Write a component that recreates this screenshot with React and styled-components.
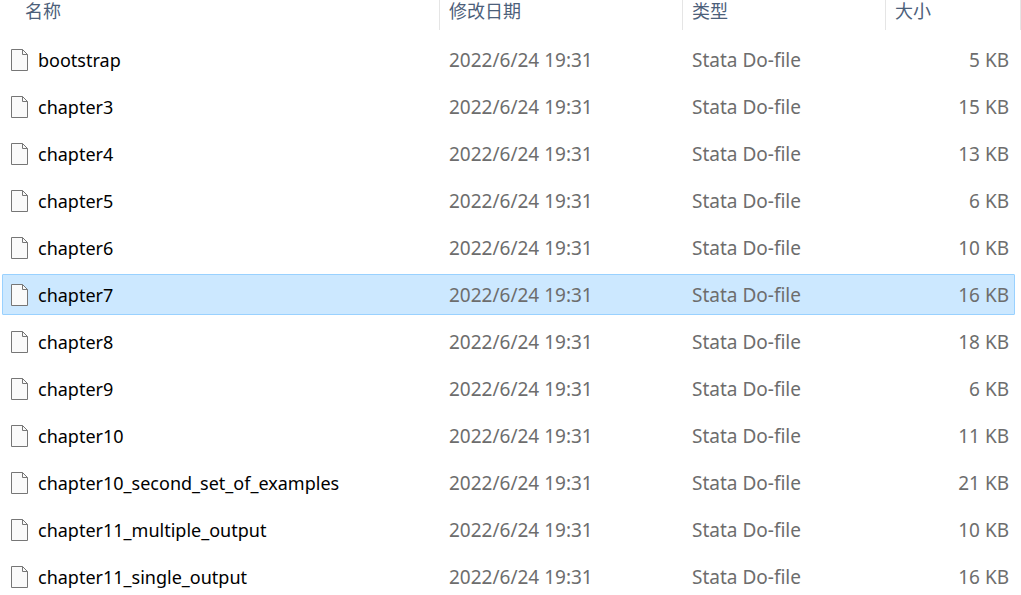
import React, { useState } from "react";
import styled, { createGlobalStyle } from "styled-components";

const colors = {
  white: "#ffffff",
  black: "#000000",
  gray: "#6d6d6d",
  lightGray: "#e5e5e5",
  slate: "#4c607a",
  blue: "#99d1ff",
  lightBlue: "#cce8ff",
};

const columns = ["名称", "修改日期", "类型", "大小"];

const files = [
  { name: "bootstrap", size: 5 },
  { name: "chapter3", size: 15 },
  { name: "chapter4", size: 13 },
  { name: "chapter5", size: 6 },
  { name: "chapter6", size: 10 },
  { name: "chapter7", size: 16 },
  { name: "chapter8", size: 18 },
  { name: "chapter9", size: 6 },
  { name: "chapter10", size: 11 },
  { name: "chapter10_second_set_of_examples", size: 21 },
  { name: "chapter11_multiple_output", size: 10 },
  { name: "chapter11_single_output", size: 16 },
];

const FileIcon = () => (
  <Icon viewBox="0 0 17 22" aria-hidden="true">
    <path d="M0.5 0.5H11.5L16.5 5.5V21.5H0.5Z" fill="#fafafa" stroke="#767676" />
    <path d="M11.5 0.5V5.5H16.5" fill="none" stroke="#767676" />
  </Icon>
);

const App = () => {
  const [selected, setSelected] = useState("chapter7");

  return (
    <>
      <GlobalStyle />
      <FileTable>
        <thead>
          <HeaderRow>
            {columns.map((column) => (
              <HeaderCell key={column} scope="col">
                {column}
              </HeaderCell>
            ))}
          </HeaderRow>
        </thead>
        <FileRows>
          {files.map((file) => (
            <FileRow
              key={file.name}
              $selected={file.name === selected}
              aria-selected={file.name === selected}
              onClick={() => setSelected(file.name)}
            >
              <NameCell>
                <FileIcon />
                {file.name}
              </NameCell>
              <Cell>2022/6/24 19:31</Cell>
              <Cell>Stata Do-file</Cell>
              <SizeCell>{file.size} KB</SizeCell>
            </FileRow>
          ))}
        </FileRows>
      </FileTable>
    </>
  );
};

const GlobalStyle = createGlobalStyle`
  * {
    box-sizing: border-box;
  }

  body {
    margin: 0;
    overflow-x: hidden;
    background-color: ${colors.white};
    font-family: "Noto Sans", "Noto Sans CJK SC", sans-serif;
  }
`;

const FileTable = styled.table`
  display: block;
  width: 100%;
  font-size: 19px;
  line-height: 26px;

  thead {
    display: block;
  }
`;

const HeaderRow = styled.tr`
  display: grid;
  grid-template-columns: minmax(0, 1fr) 243px 203px 135px;
  height: 30px;
`;

const HeaderCell = styled.th`
  padding: 0 9px;
  border-right: 1px solid ${colors.lightGray};
  color: ${colors.slate};
  font-family: "Noto Sans CJK SC", sans-serif;
  font-size: 18px;
  font-weight: 400;
  line-height: 20px;
  text-align: left;

  &:first-child {
    padding-left: 25px;
  }
`;

const FileRows = styled.tbody`
  display: flex;
  flex-direction: column;
  gap: 6px;
  padding: 9px 6px 0 2px;
`;

const FileRow = styled.tr`
  display: grid;
  grid-template-columns: minmax(0, 1fr) 243px 203px 128px;
  align-items: center;
  height: 41px;
  border: 1px solid ${({ $selected }) => ($selected ? colors.blue : "transparent")};
  border-radius: 1px;
  background-color: ${({ $selected }) =>
    $selected ? colors.lightBlue : "transparent"};
  cursor: default;
`;

const Cell = styled.td`
  padding: 0 9px;
  color: ${colors.gray};
  white-space: nowrap;
`;

const NameCell = styled(Cell)`
  display: flex;
  align-items: center;
  gap: 10px;
  padding: 0 8px;
  color: ${colors.black};
  font-size: 18px;
`;

const SizeCell = styled(Cell)`
  padding: 0 5px;
  text-align: right;
`;

const Icon = styled.svg`
  flex-shrink: 0;
  width: 17px;
  height: 22px;
`;

export default App;
